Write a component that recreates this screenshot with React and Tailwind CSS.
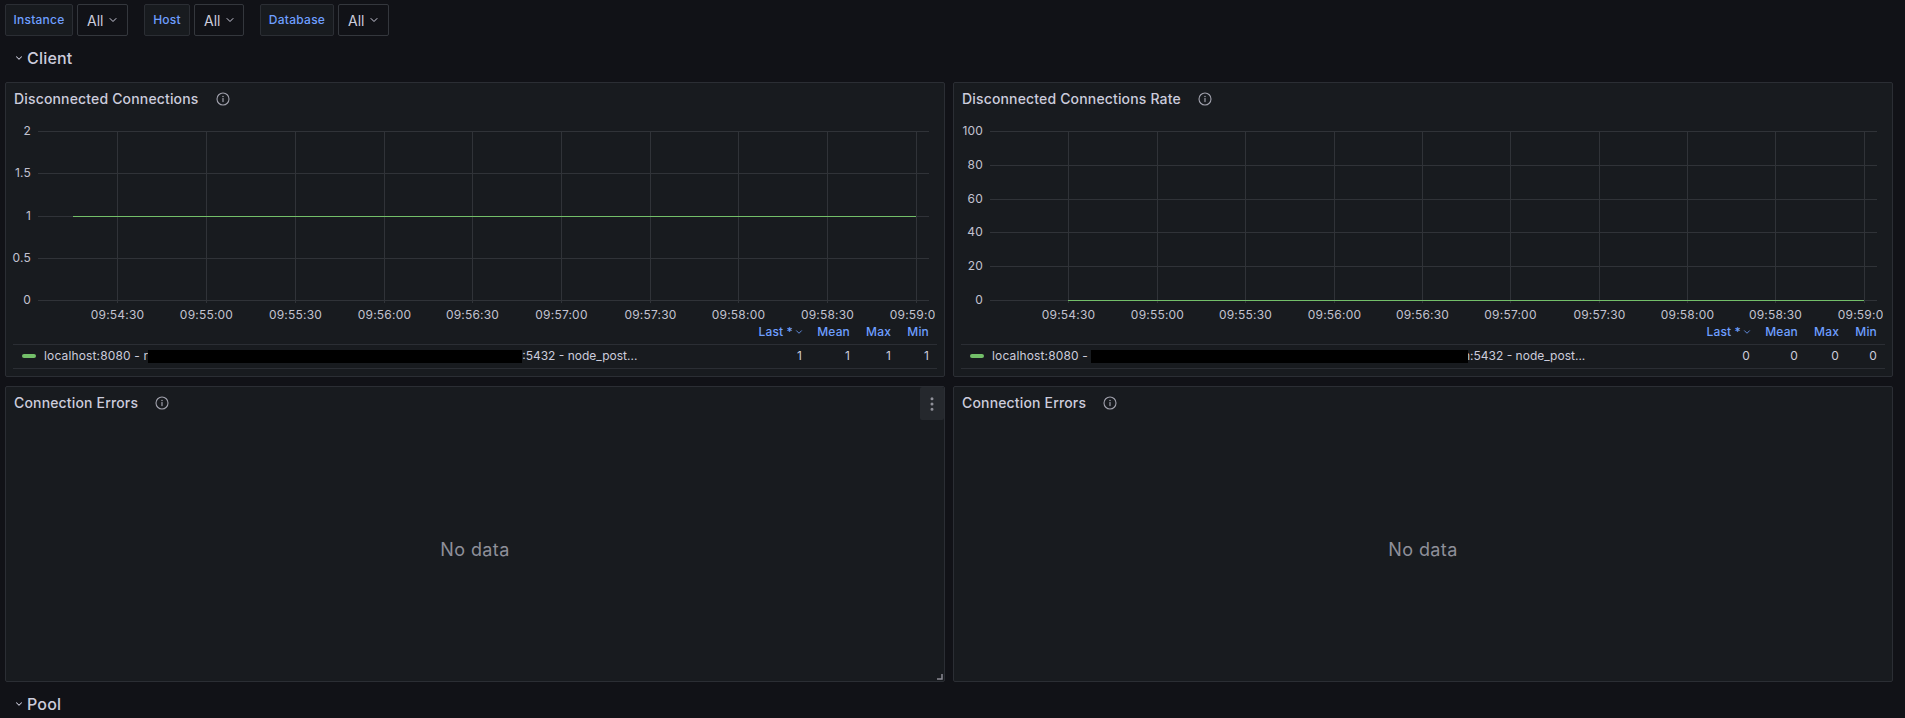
import { ChevronDown, EllipsisVertical } from 'lucide-react'

const times = ['09:54:30', '09:55:00', '09:55:30', '09:56:00', '09:56:30', '09:57:00', '09:57:30', '09:58:00', '09:58:30', '09:59:00']

function InfoIcon() {
  return (
    <svg width="14" height="14" viewBox="0 0 14 14" fill="none" className="shrink-0">
      <circle cx="7" cy="7" r="6" stroke="#a0a1ac" strokeWidth="1.1" />
      <circle cx="7" cy="4.6" r="0.75" fill="#a0a1ac" />
      <path d="M7 6.6v3" stroke="#a0a1ac" strokeWidth="1.2" strokeLinecap="round" />
    </svg>
  )
}

function Variable({ label, width, selectWidth }) {
  return (
    <div className="flex gap-1">
      <div className={`h-8 flex items-center justify-center bg-[#181b1f] border border-[#2b2e34] rounded-[2px] text-[12px] font-medium tracking-[0.25px] text-[#6e9fff] ${width}`}>
        {label}
      </div>
      <div className={`h-8 pl-[9px] flex items-center gap-[4px] bg-[#111217] border border-[#34373d] rounded-[2px] text-[14px] text-[#ccccdc] ${selectWidth}`}>
        All
        <ChevronDown size={12} strokeWidth={2} />
      </div>
    </div>
  )
}

function RowTitle({ title }) {
  return (
    <div className="h-[46px] pl-[14px] pb-[2px] flex items-center gap-[3px] text-[16px] font-medium tracking-[0.2px] text-[#ccccdc]">
      <ChevronDown size={10} strokeWidth={2.5} />
      {title}
    </div>
  )
}

function PanelTitle({ title }) {
  return (
    <div className="h-[33px] shrink-0 pl-[8px] pb-[2px] flex items-center gap-[17px] text-[14px] font-medium tracking-[0.16px] text-[#ccccdc]">
      <span>{title}</span>
      <InfoIcon />
    </div>
  )
}

// coordinates are relative to the top left of the chart area
function Chart({ ys, ticks, labelX, gridEnd, line }) {
  return (
    <svg width="929" height="208" className="shrink-0 block">
      {ys.map(([label, y]) => (
        <g key={label}>
          <line x1={labelX + 7} x2={gridEnd} y1={y + 0.5} y2={y + 0.5} stroke="#303338" />
          <text x={labelX} y={y + 3.5} textAnchor="end" fontSize="12" letterSpacing="0.2" fill="#c2c2d0" fontFamily="Inter">{label}</text>
        </g>
      ))}
      {ticks.map((x, i) => (
        <g key={x}>
          <line x1={x + 0.5} x2={x + 0.5} y1={15} y2={187} stroke="#303338" />
          <text x={x + 0.5} y={203} textAnchor="middle" fontSize="12" letterSpacing="0.2" fill="#c2c2d0" fontFamily="Inter">{times[i]}</text>
        </g>
      ))}
      <line x1={line.from} x2={line.to} y1={line.y + 0.5} y2={line.y + 0.5} stroke="#73bf69" />
    </svg>
  )
}

function Legend({ before, after, redact, afterClass, value }) {
  return (
    <div className="mx-[7px] text-[12px] tracking-[0.15px]">
      <div className="h-[21px] pb-[5px] flex items-center justify-end pr-[8px] border-b border-[#2b2e34] font-medium text-[#6e9fff]">
        <span className="flex items-center mr-[-2px]">
          Last *
          <ChevronDown size={10} strokeWidth={2} className="ml-[1px]" />
        </span>
        <span className="w-[48px] text-right">Mean</span>
        <span className="w-[41px] text-right">Max</span>
        <span className="w-[38px] text-right">Min</span>
      </div>
      <div className="h-[24px] pb-[1px] flex items-center pl-[9px] pr-[8px] border-b border-[#2b2e34] text-[#ccccdc]">
        <span className="w-[14px] h-[4px] rounded-[2px] bg-[#73bf69] mr-[8px]" />
        <span className="flex-1 flex items-center whitespace-nowrap">
          <span>{before}</span>
          <span className={`relative h-[13px] bg-black ${redact}`} />
          <span className={`tracking-normal ${afterClass}`}>{after}</span>
        </span>
        <span className="text-right">{value}</span>
        <span className="w-[48px] text-right">{value}</span>
        <span className="w-[41px] text-right">{value}</span>
        <span className="w-[38px] text-right">{value}</span>
      </div>
    </div>
  )
}

function GraphPanel({ title, chart, legend }) {
  return (
    <div className="h-[295px] flex flex-col bg-[#181b1f] border border-[#2b2e34] rounded-[2px]">
      <PanelTitle title={title} />
      <Chart {...chart} />
      <Legend {...legend} />
    </div>
  )
}

function EmptyPanel({ hovered }) {
  return (
    <div className="relative h-[296px] flex flex-col bg-[#181b1f] border border-[#2b2e34] rounded-[2px]">
      <PanelTitle title="Connection Errors" />
      <div className="flex-1 flex items-center justify-center pb-[2px] text-[18px] tracking-[0.4px] text-[#8e8f99]">No data</div>
      {hovered && (
        <>
          <div className="absolute top-0 right-0 w-[24px] h-[33px] flex items-center justify-center rounded-[2px] bg-[#25282d] text-[#8f9099]">
            <EllipsisVertical size={18} strokeWidth={2} />
          </div>
          <svg width="6" height="6" viewBox="0 0 6 6" className="absolute bottom-[1px] right-[1px]">
            <path d="M5 0v5H0" fill="none" stroke="#8a8b94" strokeWidth="1.5" />
          </svg>
        </>
      )}
    </div>
  )
}

export default function App() {
  const leftTicks = [111, 200, 289, 378, 466, 555, 644, 732, 821, 910]
  const rightTicks = [114, 203, 291, 380, 468, 556, 645, 733, 821, 910]

  return (
    <div className="h-[718px] overflow-hidden bg-[#111217] font-['Inter',sans-serif]">
      <div className="pt-1 pl-[5px] flex gap-4">
        <Variable label="Instance" width="w-[68px]" selectWidth="w-[51px]" />
        <Variable label="Host" width="w-[46px]" selectWidth="w-[50px]" />
        <Variable label="Database" width="w-[74px]" selectWidth="w-[51px]" />
      </div>

      <RowTitle title="Client" />

      <div className="pl-[5px] pr-[12px] grid grid-cols-2 gap-x-[8px] gap-y-[9px]">
        <GraphPanel
          title="Disconnected Connections"
          chart={{
            ys: [['2', 15], ['1.5', 57], ['1', 100], ['0.5', 142], ['0', 184]],
            ticks: leftTicks,
            labelX: 25,
            gridEnd: 923,
            line: { from: 67, to: 910, y: 100 },
          }}
          legend={{ before: 'localhost:8080 - r', after: ':5432 - node_post...', redact: 'w-[374px]', afterClass: '', value: '1' }}
        />
        <GraphPanel
          title="Disconnected Connections Rate"
          chart={{
            ys: [['100', 15], ['80', 49], ['60', 83], ['40', 116], ['20', 150], ['0', 184]],
            ticks: rightTicks,
            labelX: 29,
            gridEnd: 923,
            line: { from: 114, to: 910, y: 184 },
          }}
          legend={{ before: 'localhost:8080 - ', after: 'n:5432 - node_post...', redact: 'ml-[3px] w-[377px] z-10', afterClass: 'ml-[-5px]', value: '0' }}
        />
        <EmptyPanel hovered />
        <EmptyPanel />
      </div>

      <RowTitle title="Pool" />
    </div>
  )
}
